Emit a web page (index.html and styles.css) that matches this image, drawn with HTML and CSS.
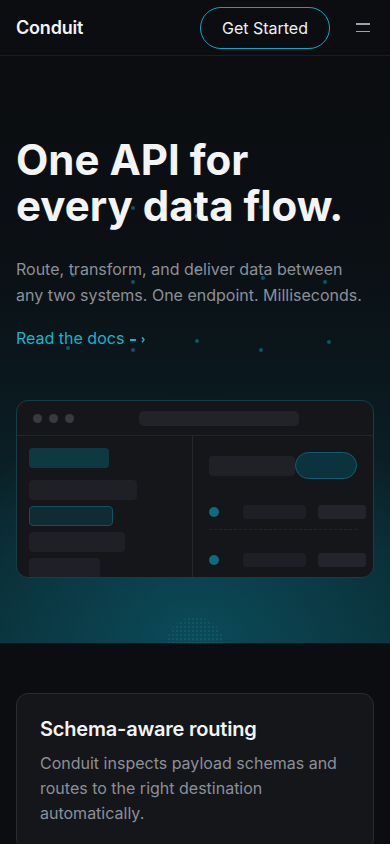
FILE: index.html
```html
<!DOCTYPE html>
<html lang="en">
<head>
<meta charset="utf-8">
<meta name="viewport" content="width=device-width, initial-scale=1">
<title>Conduit</title>
<link rel="stylesheet" href="styles.css">
</head>
<body>
<header class="topbar">
  <span class="brand">Conduit</span>
  <a class="cta" href="#">Get Started</a>
  <button class="menu" aria-label="Menu"><span></span><span></span></button>
</header>

<section class="hero">
  <div class="particles" aria-hidden="true">
    <span class="p" style="left:66px;top:149px"></span>
    <span class="p" style="left:131px;top:150px"></span>
    <span class="p" style="left:195px;top:158px"></span>
    <span class="p" style="left:259px;top:149px"></span>
    <span class="p" style="left:71px;top:217px"></span>
    <span class="p" style="left:131px;top:224px"></span>
    <span class="p" style="left:195px;top:212px"></span>
    <span class="p" style="left:261px;top:220px"></span>
    <span class="p" style="left:323px;top:224px"></span>
    <span class="p" style="left:66px;top:290px"></span>
    <span class="p" style="left:131px;top:292px"></span>
    <span class="p" style="left:195px;top:283px"></span>
    <span class="p" style="left:259px;top:292px"></span>
    <span class="p" style="left:327px;top:284px"></span>
  </div>

  <div class="hero-content">
    <h1 class="title">One API for<br>every data flow.</h1>
    <p class="lede">Route, transform, and deliver data between any two systems. One endpoint. Milliseconds.</p>
    <div class="docs-row">
      <a class="docs" href="#">Read the docs
        <svg class="arrow" width="16" height="12" viewBox="0 0 16 12" aria-hidden="true">
          <line x1="0" y1="7" x2="6" y2="7" stroke="currentColor" stroke-width="2"/>
          <polyline points="12,4.2 14,6.8 12,9.4" fill="none" stroke="currentColor" stroke-width="1.5"/>
        </svg>
      </a>
    </div>

    <div class="window">
      <div class="win-bar">
        <span class="wdot"></span><span class="wdot"></span><span class="wdot"></span>
        <span class="url"></span>
      </div>
      <div class="win-body">
        <div class="side">
          <span class="blk teal w80 first"></span>
          <span class="blk gray w108"></span>
          <span class="blk teal-outline w84"></span>
          <span class="blk gray w96"></span>
          <span class="blk gray w71"></span>
        </div>
        <div class="main">
          <div class="main-head">
            <span class="search"></span>
            <span class="pill"></span>
          </div>
          <div class="row row-first">
            <span class="rdot"></span>
            <span class="rbar"></span>
            <span class="rtag"></span>
          </div>
          <div class="row">
            <span class="rdot"></span>
            <span class="rbar"></span>
            <span class="rtag"></span>
          </div>
        </div>
      </div>
    </div>
  </div>
  <div class="glow-dots" aria-hidden="true"></div>
</section>

<section class="features">
  <article class="card">
    <h2 class="card-title">Schema-aware routing</h2>
    <p class="card-text">Conduit inspects payload schemas and routes to the right destination automatically.</p>
  </article>
</section>
</body>
</html>
```

FILE: styles.css
```css
* { box-sizing: border-box; }

body {
  margin: 0;
  background: #0c0d10;
  color: #f2f3f5;
  font-family: Inter, "Noto Sans", "Liberation Sans", sans-serif;
  -webkit-font-smoothing: antialiased;
}

/* Header */
.topbar {
  height: 56px;
  border-bottom: 1px solid #1c1d22;
  display: flex;
  align-items: center;
  padding: 0 16px;
  background: #0c0d10;
}
.brand {
  font-size: 18px;
  font-weight: 600;
  color: #f2f3f5;
  letter-spacing: -0.01em;
}
.cta {
  margin-left: auto;
  height: 42px;
  padding: 0 21px;
  display: flex;
  align-items: center;
  border: 1.5px solid #13a5c3;
  border-radius: 999px;
  color: #eef0f2;
  font-size: 16px;
  text-decoration: none;
}
.menu {
  margin-left: 22px;
  width: 22px;
  height: 22px;
  padding: 0;
  border: 0;
  background: transparent;
  display: flex;
  flex-direction: column;
  align-items: center;
  justify-content: center;
  gap: 6px;
}
.menu span {
  display: block;
  width: 14px;
  height: 1.5px;
  background: #9ea2a9;
}

/* Hero */
.hero {
  position: relative;
  overflow: hidden;
  padding: 81px 0 65px;
  background:
    radial-gradient(ellipse 70% 42% at 50% 100%, rgba(11, 78, 92, 0.9) 0%, rgba(11, 78, 92, 0) 100%),
    linear-gradient(180deg, #0b0d10 0%, #0b1014 35%, #0a1b21 62%, #0a2830 85%, #0a2d36 100%);
}
.particles {
  position: absolute;
  inset: 0;
}
.p {
  position: absolute;
  width: 4px;
  height: 4px;
  border-radius: 50%;
  background: #0c5566;
}
.hero-content {
  position: relative;
}
.title {
  margin: 0;
  padding: 0 16px;
  font-size: 42px;
  line-height: 46px;
  font-weight: 700;
  letter-spacing: 0;
  color: #f3f4f6;
}
.lede {
  margin: 28px 0 0;
  padding: 0 16px;
  font-size: 16px;
  line-height: 25.6px;
  color: #8b9098;
}
.docs-row {
  margin-top: 18px;
  padding: 0 16px;
  line-height: 24px;
}
.docs {
  color: #17b3cf;
  font-size: 16px;
  text-decoration: none;
}
.arrow {
  vertical-align: -1px;
  margin-left: 1px;
}

/* Mock window */
.window {
  margin: 50px 16px 0;
  height: 178px;
  overflow: hidden;
  background: #15161a;
  border: 1px solid #153f47;
  border-radius: 12px;
}
.win-bar {
  height: 35px;
  border-bottom: 1px solid #25262b;
  display: flex;
  align-items: center;
  padding: 0 16px;
  gap: 7px;
}
.wdot {
  width: 9px;
  height: 9px;
  border-radius: 50%;
  background: #393a40;
}
.url {
  margin: 0 auto;
  width: 160px;
  height: 15px;
  border-radius: 5px;
  background: #222328;
}
.win-body {
  display: grid;
  grid-template-columns: 176px 1fr;
  height: 141px;
}
.side {
  border-right: 1px solid #26272c;
  padding: 12px 12px 0;
  display: flex;
  flex-direction: column;
  align-items: flex-start;
  gap: 6px;
}
.blk {
  display: block;
  height: 20px;
  border-radius: 4px;
  flex-shrink: 0;
}
.blk.first { margin-bottom: 6px; }
.teal { background: #0e3943; }
.gray { background: #1f2025; }
.teal-outline { background: #0f2b33; border: 1px solid #0f5260; }
.w80 { width: 80px; }
.w108 { width: 108px; }
.w84 { width: 84px; }
.w96 { width: 96px; }
.w71 { width: 71px; }

.main {
  padding: 16px 16px 0;
}
.main-head {
  display: flex;
  align-items: center;
}
.search {
  width: 86px;
  height: 20px;
  border-radius: 4px;
  background: #202126;
}
.pill {
  width: 62px;
  height: 27px;
  border-radius: 999px;
  background: #0c333d;
  border: 1px solid #12606f;
}
.row {
  display: flex;
  align-items: center;
  margin-top: 23px;
}
.row-first {
  margin-top: 26px;
  padding-bottom: 10px;
  border-bottom: 1px dashed #25262c;
}
.rdot {
  width: 10px;
  height: 10px;
  border-radius: 50%;
  background: #0f6a7d;
  flex-shrink: 0;
}
.rbar {
  margin-left: 24px;
  width: 63px;
  height: 14px;
  border-radius: 4px;
  background: #1e1f24;
  flex-shrink: 0;
}
.rtag {
  margin-left: 12px;
  width: 48px;
  height: 14px;
  border-radius: 3px;
  background: #24252c;
  flex-shrink: 0;
  margin-right: -10px;
}

.glow-dots {
  position: absolute;
  left: 50%;
  bottom: 0;
  width: 56px;
  height: 26px;
  transform: translateX(-50%);
  border-radius: 50% 50% 0 0 / 100% 100% 0 0;
  background-image: radial-gradient(circle, rgba(40, 160, 180, 0.45) 0.7px, transparent 1.2px);
  background-size: 4px 4px;
  opacity: 0.35;
}

/* Features */
.features {
  padding: 49px 16px 40px;
  border-top: 1px solid #15171b;
}
.card {
  background: #15161a;
  border: 1px solid #2a2c31;
  border-radius: 12px;
  padding: 21px 23px 24px;
}
.card-title {
  margin: 0;
  font-size: 20px;
  line-height: 28px;
  font-weight: 600;
  color: #f2f3f5;
  letter-spacing: -0.01em;
}
.card-text {
  margin: 8px 0 0;
  font-size: 16px;
  line-height: 25px;
  color: #8b9098;
}
```
